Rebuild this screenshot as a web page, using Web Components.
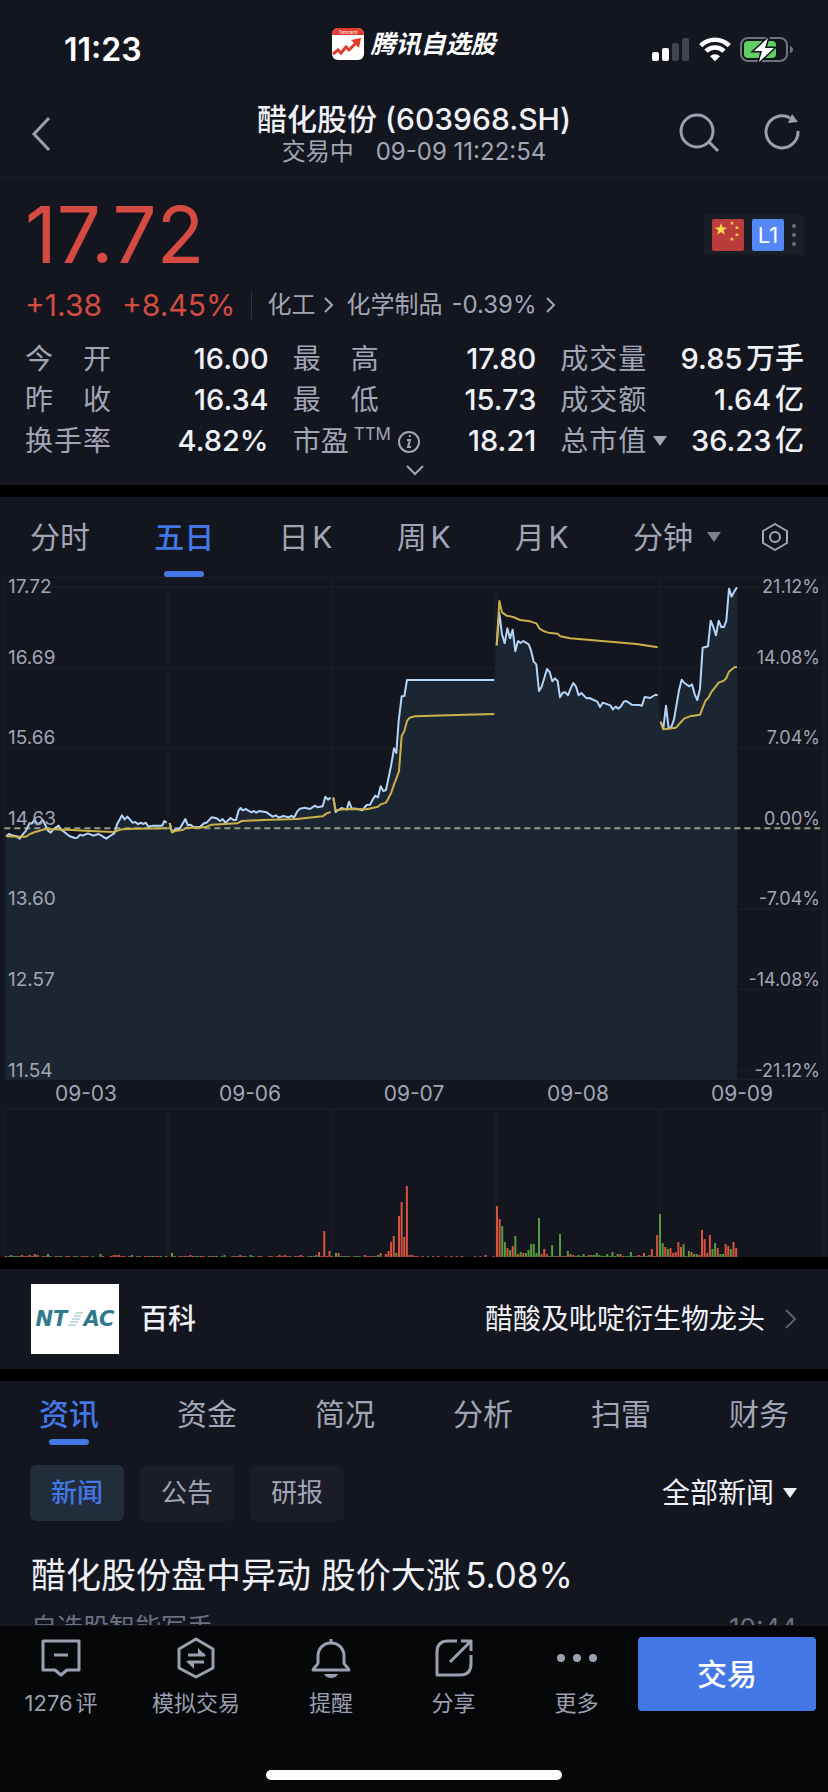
<!DOCTYPE html>
<html lang="zh-CN">
<head>
<meta charset="utf-8">
<meta name="viewport" content="width=device-width, initial-scale=1">
<title>醋化股份 (603968.SH)</title>
<style>
  :root {
    --bg: #13161f;
    --line: #1c1f28;
    --text: #f0f1f6;
    --muted: #a2a5b5;
    --blue: #4477e6;
    --red: #d54a41;
    --up: #d7523f;
    --down: #559b3f;
  }
  body {
    margin: 0;
    background: #000;
    color: var(--text);
    font-family: Inter, "Noto Sans CJK SC", sans-serif;
    line-height: 1;
    text-autospace: normal;
  }
</style>
</head>
<body>
<stock-page>
  <status-bar slot="top" data-time="11:23">腾讯自选股</status-bar>
  <quote-header slot="top" data-status="交易中" data-time="09-09 11:22:54">醋化股份 (603968.SH)</quote-header>

  <quote-summary data-price="17.72" data-change="+1.38" data-percent="+8.45%">
    <quote-field data-value="16.00">今 开</quote-field>
    <quote-field data-value="17.80">最 高</quote-field>
    <quote-field data-value="9.85万手">成交量</quote-field>
    <quote-field data-value="16.34">昨 收</quote-field>
    <quote-field data-value="15.73">最 低</quote-field>
    <quote-field data-value="1.64亿">成交额</quote-field>
    <quote-field data-value="4.82%">换手率</quote-field>
    <quote-field data-value="18.21" data-note="TTM">市盈</quote-field>
    <quote-field data-value="36.23亿" data-menu>总市值</quote-field>
  </quote-summary>

  <section-panel>
    <chart-tabs></chart-tabs>
    <trend-chart></trend-chart>
  </section-panel>

  <section-panel>
    <wiki-row data-title="百科">醋酸及吡啶衍生物龙头</wiki-row>
  </section-panel>

  <section-panel>
    <info-tabs></info-tabs>
    <news-filter></news-filter>
    <news-item data-source="自选股智能写手" data-time="10:44">醋化股份盘中异动 股价大涨5.08%</news-item>
  </section-panel>

  <bottom-bar slot="bottom">
    <bottom-item data-icon="comment">1276评</bottom-item>
    <bottom-item data-icon="swap">模拟交易</bottom-item>
    <bottom-item data-icon="bell">提醒</bottom-item>
    <bottom-item data-icon="share">分享</bottom-item>
    <bottom-item data-icon="more">更多</bottom-item>
  </bottom-bar>
</stock-page>

<script>
const resetStyle = `
  * { box-sizing: border-box; }
  button, select {
    appearance: none;
    margin: 0;
    padding: 0;
    border: 0;
    background: none;
    color: inherit;
    font: inherit;
    text-autospace: inherit;
  }
  a { color: inherit; text-decoration: none; }
  svg { display: block; flex: none; }
`

class BaseElement extends HTMLElement {

  constructor() {
    super()
    const template = document.createElement('template')
    template.innerHTML = `<style>${resetStyle}</style>${this.template()}`
    this.attachShadow({ mode: 'open' }).appendChild(template.content.cloneNode(true))
  }

}

customElements.define('stock-page', class extends BaseElement {

  template() {
    return `
      <style>
        :host { display: flex; flex-direction: column; height: 100vh; }
        header { background: var(--bg); }
        main {
          display: flex;
          flex: 1;
          flex-direction: column;
          gap: 12px;
          min-height: 0;
          overflow: hidden;
        }
        ::slotted(section-panel:last-of-type) { flex: 1 0 auto; }
      </style>
      <header><slot name="top"></slot></header>
      <main><slot></slot></main>
      <slot name="bottom"></slot>
    `
  }

})

customElements.define('section-panel', class extends BaseElement {

  template() {
    return `
      <style>:host { display: block; flex: none; background: var(--bg); }</style>
      <slot></slot>
    `
  }

})

customElements.define('status-bar', class extends BaseElement {

  template() {
    return `
      <style>
        :host {
          display: grid;
          grid-template-columns: 1fr auto 1fr;
          height: 88px;
          padding: 0 34px;
          color: #fff;
        }
        .time { padding: 30px 0 0 30px; font-size: 32px; line-height: 40px; font-weight: 600; }
        .app {
          display: flex;
          align-items: center;
          gap: 6px;
          height: 88px;
          font-size: 25px;
          font-style: italic;
          font-weight: 600;
        }
        .signals { display: flex; justify-content: flex-end; gap: 9px; padding-top: 36px; }
      </style>
      <div class="time"></div>
      <div class="app">
        <svg width="32" height="32" viewBox="0 0 32 32">
          <rect width="32" height="32" rx="6" fill="#fff"/>
          <path d="M0 7V6a6 6 0 0 1 6-6h20a6 6 0 0 1 6 6v1z" fill="#e23a2c"/>
          <text x="16" y="6" text-anchor="middle" font-size="5" font-style="normal" font-weight="400" fill="#fff">Tencent</text>
          <path d="M1 26l5-4 3 3 5-6 3 3 7-7" fill="none" stroke="#e23a2c" stroke-width="3"/>
          <path d="M19 12l10-2-2 10z" fill="#e23a2c"/>
        </svg>
        <slot></slot>
      </div>
      <div class="signals">
        <svg width="38" height="26" viewBox="0 0 38 26">
          <rect x="0" y="16" width="7" height="9" rx="2" fill="#fff"/>
          <rect x="10" y="12" width="7" height="13" rx="2" fill="#fff"/>
          <rect x="20" y="7" width="7" height="18" rx="2" fill="#43454c"/>
          <rect x="30" y="2" width="7" height="23" rx="2" fill="#43454c"/>
        </svg>
        <svg width="32" height="26" viewBox="0 0 32 26">
          <g fill="none" stroke="#fff" stroke-width="4.6">
            <path d="M1.7 9.7a20.2 20.2 0 0 1 28.6 0"/>
            <path d="M7 15.2a12.7 12.7 0 0 1 18 0"/>
          </g>
          <path d="M11 20.3a7 7 0 0 1 10 0l-5 5z" fill="#fff"/>
        </svg>
        <svg width="54" height="26" viewBox="0 0 54 26">
          <rect x="1" y="2" width="46" height="23" rx="7" fill="none" stroke="#70737a" stroke-width="2"/>
          <path d="M50 10q3 1 3 3.500t-3 3.500z" fill="#70737a"/>
          <rect x="4" y="5" width="32" height="17" rx="4" fill="#62cf65"/>
          <path d="M28 2L14 15h8l-3 11 15-14h-9z" fill="#fff" stroke="#13161f" stroke-width="3" paint-order="stroke"/>
        </svg>
      </div>
    `
  }

  connectedCallback() {
    this.shadowRoot.querySelector('.time').textContent = this.dataset.time
  }

})

customElements.define('quote-header', class extends BaseElement {

  template() {
    return `
      <style>
        :host {
          display: grid;
          grid-template-columns: 1fr auto 1fr;
          align-items: center;
          height: 89px;
          padding: 0 26px;
          border-bottom: 1px solid var(--line);
        }
        h1 { margin: 0; font-size: 30px; line-height: 36px; font-weight: 500; }
        .center { padding-top: 2px; text-align: center; }
        .sub {
          display: flex;
          justify-content: center;
          gap: 22px;
          color: var(--muted);
          font-size: 24px;
          line-height: 30px;
        }
        .back { justify-self: start; padding: 2px 4px 0; }
        .tools { display: flex; justify-content: flex-end; gap: 42px; }
        svg { fill: none; stroke: #9b9fb0; stroke-width: 3; }
      </style>
      <button class="back" aria-label="返回">
        <svg width="22" height="36" viewBox="0 0 22 36"><path d="M19 2L4 18l15 16"/></svg>
      </button>
      <div class="center">
        <h1><slot></slot></h1>
        <div class="sub"><span class="status"></span><span class="time"></span></div>
      </div>
      <div class="tools">
        <button aria-label="搜索">
          <svg width="42" height="40" viewBox="0 0 42 40"><circle cx="19" cy="18" r="16"/><path d="M31 29l9 9"/></svg>
        </button>
        <button aria-label="刷新">
          <svg width="40" height="40" viewBox="0 0 40 40">
            <path d="M28 5a16 16 0 1 0 8 13"/>
            <path d="M30 1l6 8-10 1z" fill="#9b9fb0" stroke="none"/>
          </svg>
        </button>
      </div>
    `
  }

  connectedCallback() {
    this.shadowRoot.querySelector('.status').textContent = this.dataset.status
    this.shadowRoot.querySelector('.time').textContent = this.dataset.time
  }

})

customElements.define('quote-summary', class extends BaseElement {

  template() {
    return `
      <style>
        :host { display: block; flex: none; padding: 10px 24px 0 25px; background: var(--bg); }
        .top { display: flex; justify-content: space-between; align-items: center; height: 93px; }
        .price { color: var(--red); font-size: 78px; }
        .badges {
          display: flex;
          align-items: center;
          gap: 8px;
          height: 40px;
          padding: 0 8px;
          background: #191d26;
        }
        .level {
          width: 32px;
          border-radius: 2px;
          background: #5488f7;
          color: #fff;
          font-size: 22px;
          line-height: 32px;
          text-align: center;
        }
        .change { display: flex; align-items: center; height: 48px; color: var(--red); font-size: 30px; }
        .change .percent { margin-left: 20px; }
        .sector {
          display: flex;
          align-items: center;
          gap: 12px;
          height: 28px;
          margin-left: 16px;
          padding-left: 15px;
          border-left: 1px solid #2d3140;
          color: var(--muted);
          font-size: 24px;
        }
        .sector a { display: flex; align-items: center; gap: 9px; white-space: nowrap; }
        .fields {
          display: grid;
          grid-template-columns: repeat(3, 1fr);
          column-gap: 24px;
          padding-top: 9px;
        }
        .expand { display: block; margin: 0 auto; padding: 3px 8px 9px; }
        .chevron { fill: none; stroke: #a2a5b5; stroke-width: 2; }
      </style>
      <div class="top">
        <div class="price"></div>
        <div class="badges">
          <svg width="32" height="32" viewBox="0 0 32 32">
            <rect width="32" height="32" rx="2" fill="#bc3b3b"/>
            <g fill="#fbd952">
              <path d="M9 4l1.600 4.400 4.600.1-3.700 2.800 1.400 4.500L9 13.100l-3.900 2.700 1.400-4.500-3.700-2.800 4.600-.1z"/>
              <path d="M20 2l.6 1.500h1.600l-1.200 1 .5 1.600-1.500-1-1.500 1 .5-1.600-1.200-1h1.600z"/>
              <path d="M25 6.500l.6 1.500h1.600l-1.200 1 .5 1.600-1.500-1-1.500 1 .5-1.600-1.200-1h1.600z"/>
              <path d="M25 13.500l.6 1.500h1.600l-1.200 1 .5 1.600-1.500-1-1.500 1 .5-1.600-1.200-1h1.600z"/>
              <path d="M20 18l.6 1.500h1.600l-1.200 1 .5 1.600-1.500-1-1.500 1 .5-1.600-1.200-1h1.600z"/>
            </g>
          </svg>
          <div class="level">L1</div>
          <svg width="4" height="24" viewBox="0 0 4 24" fill="#6a6d76">
            <circle cx="2" cy="3" r="2"/><circle cx="2" cy="12" r="2"/><circle cx="2" cy="21" r="2"/>
          </svg>
        </div>
      </div>
      <div class="change">
        <span class="amount"></span>
        <span class="percent"></span>
        <nav class="sector">
          <a href="#chemical">化工
            <svg class="chevron" width="10" height="16" viewBox="0 0 10 16"><path d="M1 1l7 7-7 7"/></svg>
          </a>
          <a href="#products">化学制品 <span>-0.39%</span>
            <svg class="chevron" width="10" height="16" viewBox="0 0 10 16"><path d="M1 1l7 7-7 7"/></svg>
          </a>
        </nav>
      </div>
      <div class="fields"><slot></slot></div>
      <button class="expand" aria-label="展开">
        <svg class="chevron" width="18" height="12" viewBox="0 0 18 12"><path d="M1 2l8 8 8-8"/></svg>
      </button>
    `
  }

  connectedCallback() {
    this.shadowRoot.querySelector('.price').textContent = this.dataset.price
    this.shadowRoot.querySelector('.amount').textContent = this.dataset.change
    this.shadowRoot.querySelector('.percent').textContent = this.dataset.percent
  }

})

customElements.define('quote-field', class extends BaseElement {

  template() {
    return `
      <style>
        :host {
          display: flex;
          align-items: center;
          height: 41px;
          font-size: 28px;
          line-height: 40px;
          white-space: nowrap;
        }
        .label { width: 86px; color: var(--muted); text-align-last: justify; }
        :host([data-note]) .label { width: auto; }
        .note, .menu { display: none; color: var(--muted); }
        :host([data-note]) .note { display: flex; align-items: center; gap: 6px; padding-left: 5px; }
        :host([data-menu]) .menu { display: block; padding-left: 7px; }
        sup { font-size: 17px; line-height: 26px; padding-bottom: 14px; }
        .value { margin-left: auto; font-size: 29px; font-weight: 500; }
      </style>
      <span class="label"><slot></slot></span>
      <span class="note">
        <sup></sup>
        <svg width="24" height="24" viewBox="0 0 24 24" fill="none" stroke="#a2a5b5" stroke-width="2">
          <circle cx="12" cy="13" r="10"/>
          <path d="M10 11h3l-2 7h3"/>
          <path d="M13 6l-.4 2"/>
        </svg>
      </span>
      <button class="menu" aria-label="切换市值">
        <svg width="14" height="10" viewBox="0 0 14 10"><path d="M0 0h14L7 10z" fill="#a2a5b5"/></svg>
      </button>
      <span class="value"></span>
    `
  }

  connectedCallback() {
    this.shadowRoot.querySelector('sup').textContent = this.dataset.note || ''
    this.shadowRoot.querySelector('.value').textContent = this.dataset.value
  }

})

customElements.define('chart-tabs', class extends BaseElement {

  template() {
    return `
      <style>
        :host {
          display: flex;
          justify-content: space-between;
          height: 80px;
          padding: 0 39px 0 30px;
          color: var(--muted);
          font-size: 30px;
        }
        button { display: flex; align-items: center; gap: 14px; height: 80px; white-space: nowrap; }
        .active { position: relative; color: var(--blue); font-weight: 500; }
        .active::after {
          content: "";
          position: absolute;
          bottom: 0;
          left: calc(50% - 20px);
          width: 40px;
          height: 6px;
          border-radius: 3px;
          background: var(--blue);
        }
        .last { display: flex; gap: 40px; }
      </style>
      <button>分时</button>
      <button class="active">五日</button>
      <button>日K</button>
      <button>周K</button>
      <button>月K</button>
      <div class="last">
        <button>分钟
          <svg width="14" height="10" viewBox="0 0 14 10"><path d="M0 0h14L7 10z" fill="#7d8090"/></svg>
        </button>
        <button aria-label="设置">
          <svg width="28" height="28" viewBox="0 0 28 28" fill="none" stroke="#a2a5b5" stroke-width="2">
            <path d="M14 1l12 7v12l-12 7-12-7V8z" stroke-linejoin="round"/>
            <circle cx="14" cy="14" r="5"/>
          </svg>
        </button>
      </div>
    `
  }

})

// Each session: x offset of its points, traded price, average price
const sessions = [
  {
    shift: 0,
    price: '18,796 27,789 35,793 50,796 59,803 66,793 78,779 88,757 96,757 104,746 112,760 120,756 128,746 136,762 144,779 152,785 160,775 176,764 184,777 192,782 208,795 224,801 232,800 240,791 248,794 264,787 280,794 296,789 308,796 319,803 330,795 343,787 352,758 366,733 374,745 382,737 398,755 406,753 414,760 422,755 430,759 437,755 445,767 460,764 487,764 493,750 500,755',
    average: '18,796 66,797 78,797 90,789 105,783 120,779 135,774 200,776 270,780 340,783 365,775 400,773 500,772'
  },
  {
    shift: 0,
    price: '509,756 516,784 524,777 540,772 556,744 564,763 572,761 580,768 600,768 612,757 620,755 635,739 650,742 660,750 668,744 676,755 692,741 700,747 708,747 716,718 722,711 728,718 738,714 745,719 755,724 761,720 769,725 777,720 800,724 818,737 828,733 836,740 850,735 866,739 875,734 882,740 892,721 900,713 914,710 930,714 945,704 953,709 968,706 976,677 984,686 992,680',
    average: '509,756 516,784 530,779 548,777 560,770 600,770 620,767 635,761 712,757 725,750 790,747 890,744 968,736 980,727 992,723'
  },
  {
    shift: 0,
    price: '1000,680 1007,723 1024,711 1040,716 1047,692 1055,712 1070,713 1087,718 1100,702 1110,701 1118,686 1126,674 1134,679 1142,646 1150,660 1158,657 1173,585 1182,532 1189,546 1196,450 1205,376 1213,375 1221,327 1483,327',
    average: '1000,680 1007,718 1040,714 1100,715 1134,707 1142,700 1158,695 1173,667 1182,640 1190,620 1197,600 1205,495 1213,480 1221,450 1229,440 1245,436 1370,432 1483,429'
  },
  {
    shift: 1230,
    price: '260,223 268,126 276,190 284,217 292,172 300,202 308,176 316,241 324,210 332,216 340,210 348,215 356,220 363,238 371,272 379,280 387,360 395,347 411,294 419,303 427,331 435,322 443,330 450,379 458,365 466,364 474,373 482,352 490,336 498,347 506,373 514,366 530,382 538,381 562,392 570,408 578,395 601,403 609,415 617,407 625,413 633,406 641,392 649,390 665,401 688,402 696,404 704,378 720,381 735,372 743,372',
    average: '260,223 268,90 276,124 290,134 310,138 330,147 360,151 379,157 389,173 400,180 415,185 443,188 451,196 480,202 680,219 743,229'
  },
  {
    shift: 1230,
    price: '752,452 760,472 768,404 776,472 784,468 792,445 807,358 815,326 823,336 838,346 846,340 854,370 862,387 870,353 878,230 894,226 902,149 910,168 918,193 926,149 934,168 942,168 949,149 957,53 965,77 973,61 981,49',
    average: '752,452 760,475 776,473 798,470 823,442 840,436 870,431 886,390 895,380 903,365 926,335 942,329 949,321 957,302 973,289 981,288'
  }
]

// Volume bars of each session: start x, then direction and height, one per slot
const volumes = [
  [6, 'r1g1g2g1g1g1r2r1r1r2r1r3g2g0r1r1g3g1r0r1r1g1r0r1r1g0r1g1r0r1r1r1g0g1r0r0g3r1g0r0r1r2r2r2r1r1g0r1g2r0r1g1g0r1r1g1g1r1r1g1r0r1'],
  [172, 'g4g1g0r1r1g1r1r2r1g1g1r1r1r0r1g1r1g1r0g1g2r0g0g1r1r1r2r1g1r0g2g1r0r1r1g0g0r1r1r0r1r2r1r2r1g1r0r1r1r2r1r0g1r1g1g2r5r1r26r1r6r1'],
  [336, 'g4r4g1g1g1r1r0g1g1g1r0r2r1r1r1g1g2r4g0r3r6r15r21g4r41r55r20r71r2r2r1r1r0r1r0g1r0r1r0r1r0g0r1r0r1r0r1r0r1r0r0r0r0r1r0r1r0r2r0r0r1'],
  [497, 'r51r38g31g15r9g7r11g21r3g5r4g4g7g13g13g4g39r3r8r3g1g12r1r1g23r1r1g6r3r2g1g2g1g3g1r2g2g2g4g2g1g1g3g1g5g1g3r3r1g1g1g5g1g1r2g1r4g1g2r8r1r22'],
  [660, 'g43g14r10g8r9r4r5r15r10g13g1g6r5g3g3r2r27r18r4r22g8g14r9g3g3r13r11g8r15r9']
]

customElements.define('trend-chart', class extends BaseElement {

  template() {
    return `
      <style>
        :host { display: block; color: var(--muted); }
        .plot { position: relative; height: 503px; }
        .plot > svg, .volume svg { width: 100%; height: 100%; }
        .grid { fill: none; stroke: #1d212a; stroke-width: 1; }
        .area { fill: #1b2632; }
        .price, .average, .base { fill: none; stroke-width: 2; stroke-linejoin: round; }
        .price { stroke: #b4d4f8; }
        .average { stroke: #cdb04a; }
        .base { stroke: #929e84; stroke-dasharray: 6 4; }
        path, polyline, polygon { vector-effect: non-scaling-stroke; }
        .scale {
          position: absolute;
          top: 0;
          display: grid;
          grid-template-rows: 71px 80px 81px 80px 81px 91px 19px;
          font-size: 19px;
          line-height: 20px;
        }
        .left { left: 8px; }
        .right { right: 8px; font-size: 18px; text-align: right; }
        .days {
          display: grid;
          grid-template-columns: repeat(5, 1fr);
          padding: 0 4px;
          font-size: 21px;
          line-height: 28px;
          text-align: center;
        }
        .volume { height: 149px; }
      </style>
      <div class="plot">
        <svg viewBox="0 18 2484 1509" preserveAspectRatio="none">
          <polygon class="area"/>
          <path class="grid" d="M13 19H2472M13 48H2472M13 290H2472M13 532H2472M13 773H2472M13 1014H2472M13 1256H2472M13 1497H2472M13 1526H2472M13 18V1527M504 18V1527M996 18V1527M1488 18V1527M1980 18V1527M2472 18V1527"/>
          <path class="base" d="M13 772H2460"/>
        </svg>
        <div class="scale left"></div>
        <div class="scale right"></div>
      </div>
      <div class="days"></div>
      <div class="volume">
        <svg viewBox="0 0 828 149" preserveAspectRatio="none">
          <path class="grid" d="M4 1H824M4 0V149M168 0V149M332 0V149M496 0V149M660 0V149M824 0V149"/>
        </svg>
      </div>
    `
  }

  connectedCallback() {
    this.fill('.left', ['17.72', '16.69', '15.66', '14.63', '13.60', '12.57', '11.54'])
    this.fill('.right', ['21.12%', '14.08%', '7.04%', '0.00%', '-7.04%', '-14.08%', '-21.12%'])
    this.fill('.days', ['09-03', '09-06', '09-07', '09-08', '09-09'])
    this.drawLines()
    this.drawVolume()
  }

  fill(selector, texts) {
    this.shadowRoot.querySelector(selector).innerHTML = texts.map(text => `<span>${text}</span>`).join('')
  }

  points(text, shift) {
    return text.split(' ').map(pair => {
      const [x, y] = pair.split(',').map(Number)
      return `${x + shift},${y}`
    }).join(' ')
  }

  shape(svg, name, attributes) {
    const node = document.createElementNS('http://www.w3.org/2000/svg', name)
    Object.keys(attributes).forEach(key => node.setAttribute(key, attributes[key]))
    svg.appendChild(node)
  }

  drawLines() {
    const svg = this.shadowRoot.querySelector('.plot svg')
    const outline = sessions.map(day => this.points(day.price, day.shift)).join(' ')
    svg.querySelector('.area').setAttribute('points', `18,1527 ${outline} 2211,1527`)
    sessions.forEach(day => {
      this.shape(svg, 'polyline', { class: 'price', points: this.points(day.price, day.shift) })
      this.shape(svg, 'polyline', { class: 'average', points: this.points(day.average, day.shift) })
    })
  }

  drawVolume() {
    const svg = this.shadowRoot.querySelector('.volume svg')
    volumes.forEach(([start, bars]) => {
      Array.from(bars.matchAll(/([rg])(\d+)/g)).forEach(([, side, height], i) => {
        this.shape(svg, 'rect', {
          x: start - 1 + i * 2.625,
          y: 149 - height,
          width: 2,
          height,
          fill: side === 'r' ? 'var(--up)' : 'var(--down)'
        })
      })
    })
  }

})

customElements.define('wiki-row', class extends BaseElement {

  template() {
    return `
      <style>
        a {
          display: flex;
          align-items: center;
          height: 100px;
          padding: 0 31px;
          font-size: 28px;
        }
        .logo {
          display: flex;
          align-items: center;
          justify-content: center;
          width: 88px;
          height: 70px;
          background: #fff;
          color: #2f7a8c;
          font: italic bold 21px "DejaVu Sans", sans-serif;
        }
        .title { margin: 0 auto 0 21px; font-weight: 500; }
        .arrow { margin-left: 20px; fill: none; stroke: #5c5f6c; stroke-width: 2; }
      </style>
      <a href="#wiki">
        <span class="logo">
          NT
          <svg width="16" height="14" viewBox="0 0 16 14" stroke="#8fbac6" stroke-width="1">
            <path d="M8 1h8M7 4h7M5 7h8M3 10h8M1 13h8"/>
          </svg>
          AC
        </span>
        <span class="title"></span>
        <slot></slot>
        <svg class="arrow" width="12" height="20" viewBox="0 0 12 20"><path d="M1 1l9 9-9 9"/></svg>
      </a>
    `
  }

  connectedCallback() {
    this.shadowRoot.querySelector('.title').textContent = this.dataset.title
  }

})

customElements.define('info-tabs', class extends BaseElement {

  template() {
    return `
      <style>
        :host {
          display: grid;
          grid-template-columns: repeat(6, 1fr);
          height: 64px;
          color: var(--muted);
          font-size: 30px;
        }
        button { height: 64px; padding-top: 2px; }
        .active { position: relative; color: var(--blue); font-weight: 500; }
        .active::after {
          content: "";
          position: absolute;
          bottom: 0;
          left: calc(50% - 20px);
          width: 40px;
          height: 6px;
          border-radius: 3px;
          background: var(--blue);
        }
      </style>
      <button class="active">资讯</button>
      <button>资金</button>
      <button>简况</button>
      <button>分析</button>
      <button>扫雷</button>
      <button>财务</button>
    `
  }

})

customElements.define('news-filter', class extends BaseElement {

  template() {
    return `
      <style>
        :host { display: flex; gap: 16px; padding: 20px 31px 0 30px; color: var(--muted); font-size: 26px; }
        button { width: 94px; height: 56px; border-radius: 6px; background: #1a1d26; }
        .active { background: #222d3c; color: var(--blue); font-weight: 500; }
        label { display: flex; align-items: center; gap: 8px; margin-left: auto; color: var(--text); font-size: 28px; }
        select { height: 40px; line-height: 40px; }
      </style>
      <button class="active">新闻</button>
      <button>公告</button>
      <button>研报</button>
      <label>
        <select aria-label="新闻范围"><option>全部新闻</option></select>
        <svg width="14" height="10" viewBox="0 0 14 10"><path d="M0 0h14L7 10z" fill="#f0f1f6"/></svg>
      </label>
    `
  }

})

customElements.define('news-item', class extends BaseElement {

  template() {
    return `
      <style>
        :host { display: block; padding: 31px 31px 0; }
        h2 { margin: 0; font-size: 35px; line-height: 46px; font-weight: 400; }
        .meta {
          display: flex;
          justify-content: space-between;
          padding-top: 12px;
          color: #6d7080;
          font-size: 26px;
          line-height: 36px;
        }
      </style>
      <h2><slot></slot></h2>
      <div class="meta"><span class="source"></span><time></time></div>
    `
  }

  connectedCallback() {
    this.shadowRoot.querySelector('.source').textContent = this.dataset.source
    this.shadowRoot.querySelector('time').textContent = this.dataset.time
  }

})

customElements.define('bottom-bar', class extends BaseElement {

  template() {
    return `
      <style>
        :host {
          display: block;
          flex: none;
          height: 166px;
          border-top: 1px solid #17181c;
          background: #060709;
        }
        .row {
          display: grid;
          grid-template-columns: 122fr 148fr 122fr 123fr 123fr 190fr;
          align-items: start;
        }
        .trade {
          height: 74px;
          margin: 11px 12px 0 0;
          border-radius: 4px;
          background: var(--blue);
          color: #fff;
          font-size: 30px;
          font-weight: 500;
        }
        .home { width: 296px; height: 10px; margin: 52px auto 0; border-radius: 5px; background: #fff; }
      </style>
      <div class="row"><slot></slot><button class="trade">交易</button></div>
      <div class="home"></div>
    `
  }

})

const bottomIcons = {
  comment: '<path d="M2 3h36v29H26l-6 5-6-5H2z"/><path d="M13 17h14"/>',
  swap: '<path d="M20 1l17 10v19L20 39 3 30V11z"/><path d="M12 17h17M28 24H12"/><path d="M22 10l8 8h-8zM18 31l-8-8h8z" fill="#9b9fb0" stroke="none"/>',
  bell: '<path d="M20 1v4M20 5c-8 0-13 6-13 13v7c0 2-5 5-5 7h36c0-2-5-5-5-7v-7c0-7-5-13-13-13z"/><path d="M13 36h14q-2 4-7 4t-7-4z" fill="#9b9fb0" stroke="none"/>',
  share: '<path d="M23 3h-9Q3 3 3 14v23h23q11 0 11-11v-9M27 3h10v10M36 4L16 24"/>',
  more: '<g fill="#9b9fb0" stroke="none"><circle cx="4" cy="20" r="4"/><circle cx="20" cy="20" r="4"/><circle cx="36" cy="20" r="4"/></g>'
}

customElements.define('bottom-item', class extends BaseElement {

  template() {
    return `
      <style>
        :host { display: block; color: #9b9fb0; font-size: 22px; line-height: 30px; }
        button {
          display: flex;
          flex-direction: column;
          align-items: center;
          gap: 10px;
          width: 100%;
          padding-top: 12px;
          white-space: nowrap;
        }
        svg { overflow: visible; fill: none; stroke: #9b9fb0; stroke-width: 3; stroke-linejoin: round; }
      </style>
      <button>
        <svg width="40" height="40" viewBox="0 0 40 40"></svg>
        <span><slot></slot></span>
      </button>
    `
  }

  connectedCallback() {
    this.shadowRoot.querySelector('svg').innerHTML = bottomIcons[this.dataset.icon]
  }

})
</script>
</body>
</html>
